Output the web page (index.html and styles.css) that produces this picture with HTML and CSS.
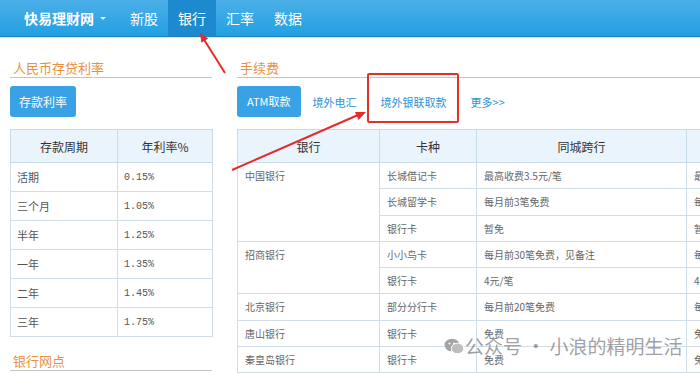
FILE: index.html
```html
<!DOCTYPE html>
<html lang="zh-CN">
<head>
    <meta charset="UTF-8">
    <title>快易理财网 - 银行</title>
    <link rel="stylesheet" href="styles.css">
</head>
<body>
    <header class="navbar">
        <div class="brand">快易理财网 <span class="caret"></span></div>
        <nav class="nav">
            <a class="nav-item">新股</a>
            <a class="nav-item active">银行</a>
            <a class="nav-item">汇率</a>
            <a class="nav-item">数据</a>
        </nav>
    </header>

    <div class="page">
        <aside class="side">
            <h2 class="section-title">人民币存贷利率</h2>
            <div class="tabs">
                <a class="tab-btn">存款利率</a>
            </div>
            <table class="grid rates">
                <thead>
                    <tr><th>存款周期</th><th>年利率%</th></tr>
                </thead>
                <tbody>
                    <tr><td>活期</td><td class="num">0.15%</td></tr>
                    <tr><td>三个月</td><td class="num">1.05%</td></tr>
                    <tr><td>半年</td><td class="num">1.25%</td></tr>
                    <tr><td>一年</td><td class="num">1.35%</td></tr>
                    <tr><td>二年</td><td class="num">1.45%</td></tr>
                    <tr><td>三年</td><td class="num">1.75%</td></tr>
                </tbody>
            </table>
            <h2 class="section-title spaced">银行网点</h2>
        </aside>

        <main class="main">
            <h2 class="section-title">手续费</h2>
            <div class="tabs">
                <a class="tab-btn mono">ATM取款</a>
                <a class="tab-link">境外电汇</a>
                <a class="tab-link">境外银联取款</a>
                <a class="tab-link">更多&gt;&gt;</a>
            </div>
            <table class="grid fees">
                <colgroup>
                    <col class="c-bank"><col class="c-card"><col class="c-fee"><col class="c-fee">
                </colgroup>
                <thead>
                    <tr><th>银行</th><th>卡种</th><th>同城跨行</th><th>异地跨行</th></tr>
                </thead>
                <tbody>
                    <tr><td rowspan="3">中国银行</td><td>长城借记卡</td><td>最高收费3.5元/笔</td><td>最高收费3.5元/笔</td></tr>
                    <tr><td>长城留学卡</td><td>每月前3笔免费</td><td>每月前3笔免费</td></tr>
                    <tr><td>银行卡</td><td>暂免</td><td>暂免</td></tr>
                    <tr><td rowspan="2">招商银行</td><td>小小鸟卡</td><td>每月前30笔免费，见备注</td><td>每月前30笔免费</td></tr>
                    <tr><td>银行卡</td><td>4元/笔</td><td>4元/笔</td></tr>
                    <tr><td>北京银行</td><td>部分分行卡</td><td>每月前20笔免费</td><td>每月前20笔免费</td></tr>
                    <tr><td>唐山银行</td><td>银行卡</td><td>免费</td><td>免费</td></tr>
                    <tr><td>秦皇岛银行</td><td>银行卡</td><td>免费</td><td>免费</td></tr>
                </tbody>
            </table>
        </main>
    </div>

    <!-- 标注层：红框、箭头、水印 -->
    <div class="mark-box"></div>
    <svg class="arrows" width="700" height="374" viewBox="0 0 700 374">
        <line x1="225" y1="73" x2="203" y2="38" stroke="#e52b2b" stroke-width="2"/>
        <polygon points="200,33 208.2,38.5 201.4,42.7" fill="#e52b2b"/>
        <line x1="232" y1="170" x2="358" y2="115" stroke="#e52b2b" stroke-width="2"/>
        <polygon points="366,112 358.6,120.1 355,111.9" fill="#e52b2b"/>
    </svg>
    <div class="watermark">
        <svg class="wx" width="20" height="17" viewBox="0 0 20 17">
            <ellipse cx="8" cy="7" rx="7.5" ry="6.3" fill="#a3a3a3"/>
            <ellipse cx="13.5" cy="10.5" rx="6.2" ry="5.3" fill="#bdbdbd" stroke="#fff" stroke-width="1"/>
            <circle cx="5.5" cy="5.5" r="1" fill="#fff"/>
            <circle cx="10" cy="5.5" r="1" fill="#fff"/>
        </svg>
        <span>公众号 · 小浪的精明生活</span>
    </div>
</body>
</html>
```

FILE: styles.css
```css
/* 基础 */
body {
    margin: 0;
    font-family: "Noto Sans CJK SC", "Liberation Sans", sans-serif;
    background-color: #fff;
    color: #555;
    width: 700px;
    height: 374px;
    overflow: hidden;
    position: relative;
}

a {
    cursor: pointer;
}

/* 顶部导航 */
.navbar {
    height: 36px;
    display: flex;
    align-items: stretch;
    background: linear-gradient(#4cafe8, #22a0e2);
    border-bottom: 1px solid #1b80c2;
    box-shadow: 0 1px 0 #d4ecf9;
}

.brand {
    width: 96px;
    padding-left: 24px;
    display: flex;
    align-items: center;
    color: #fff;
    font-size: 14px;
    font-weight: bold;
}

.caret {
    margin-left: 6px;
    width: 0;
    height: 0;
    border-left: 3px solid transparent;
    border-right: 3px solid transparent;
    border-top: 3px solid #e6f3fc;
}

.nav {
    display: flex;
}

.nav-item {
    display: flex;
    align-items: center;
    padding: 0 10px;
    color: #fff;
    font-size: 14px;
}

.nav-item.active {
    background-color: #1d8ad0;
}

/* 主体布局 */
.page {
    display: flex;
    gap: 25px;
    padding-left: 10px;
}

.side {
    width: 202px;
    flex-shrink: 0;
}

.main {
    flex: 1;
    min-width: 0;
    overflow: hidden;
}

.section-title {
    margin: 22px 0 0;
    padding-left: 3px;
    font-size: 13px;
    font-weight: normal;
    line-height: 18px;
    color: #e8913f;
    border-bottom: 1px solid #c4c4c4;
}

.section-title.spaced {
    margin-top: 15px;
}

/* 选项卡 */
.tabs {
    display: flex;
    align-items: center;
    margin-top: 8px;
    height: 31px;
}

.tab-btn {
    height: 31px;
    line-height: 31px;
    padding: 0 9px;
    background-color: #38a2e4;
    color: #fff;
    font-size: 12px;
    border-radius: 3px;
}

.tab-btn.mono {
    font-size: 11px;
    padding: 0 10px;
}

.tab-link {
    padding: 0 12px;
    color: #2f93d6;
    font-size: 11px;
}

/* 表格 */
.grid {
    margin-top: 12px;
    border-collapse: collapse;
    table-layout: fixed;
}

.grid th {
    background-color: #eaf4fc;
    color: #333;
    font-size: 12px;
    font-weight: normal;
    height: 32px;
    padding: 0 6px;
    border: 1px solid #c8dbe9;
}

.grid td {
    border: 1px solid #cfdde8;
    color: #555;
    vertical-align: top;
    white-space: nowrap;
    overflow: hidden;
}

.rates {
    width: 203px;
}

.rates th:first-child {
    width: 94px;
}

.rates td {
    height: 15px;
    line-height: 15px;
    padding: 7px 6px 6px;
    font-size: 11px;
}

.rates td.num {
    font-family: "Liberation Mono", monospace;
    font-size: 10px;
}

.fees {
    width: 660px;
}

.c-bank { width: 142px; }
.c-card { width: 97px; }
.c-fee { width: 210px; }

.fees td {
    line-height: 15.3px;
    padding: 5px 6px 5px 7px;
    font-size: 10px;
    color: #666;
}

/* 标注 */
.mark-box {
    position: absolute;
    left: 367px;
    top: 73px;
    width: 88px;
    height: 46px;
    border: 2px solid #e2302d;
    border-radius: 2px;
}

.arrows {
    position: absolute;
    left: 0;
    top: 0;
    pointer-events: none;
}

.watermark {
    position: absolute;
    left: 444px;
    top: 334px;
    display: flex;
    align-items: center;
    gap: 1px;
    color: rgba(120, 120, 120, 0.7);
    font-size: 19px;
    line-height: 24px;
    pointer-events: none;
}
```
